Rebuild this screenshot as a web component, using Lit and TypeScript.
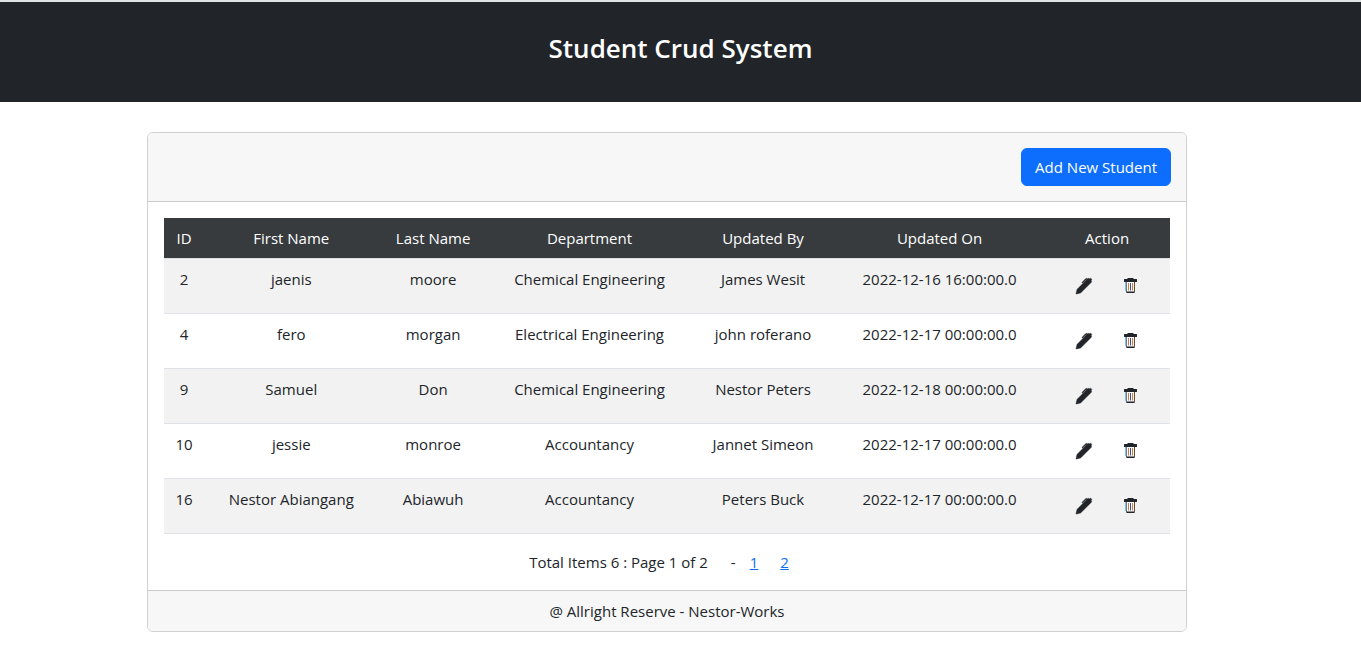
import { LitElement, html, css } from "lit";
import { customElement, state } from "lit/decorators.js";

interface Student {
  id: number;
  firstName: string;
  lastName: string;
  department: string;
  updatedBy: string;
  updatedOn: string;
}

const penIcon = html`<svg class="icon pen" viewBox="0 0 16 16" aria-hidden="true">
  <path
    d="m13.498.795.149-.149a1.207 1.207 0 1 1 1.707 1.708l-.149.148a1.5 1.5 0 0 1-.059 2.059L4.854 14.854a.5.5 0 0 1-.233.131l-4 1a.5.5 0 0 1-.606-.606l1-4a.5.5 0 0 1 .131-.232l9.642-9.642a.5.5 0 0 0-.642.056L6.854 4.854a.5.5 0 1 1-.708-.708L9.44.854A1.5 1.5 0 0 1 11.5.796a1.5 1.5 0 0 1 1.998-.001"
  />
</svg>`;

const trashIcon = html`<svg class="icon" viewBox="0 0 16 16" aria-hidden="true">
  <path class="bin-inside" d="M4 4h9v10H4z" />
  <path class="bin-left" d="M3 4h1v9H3z" />
  <path class="bin-right" d="M12 4h1v9h-1z" />
  <path d="M6 0h5l1 1h2.500a.5.5 0 0 1 .5.5V3.500a.5.5 0 0 1-.5.5h-12a.5.5 0 0 1-.5-.5v-2a.5.5 0 0 1 .5-.5H5z" />
  <path d="M4 4h.6v9.400h7.800V4h.6v9.500a1.500 1.500 0 0 1-1.500 1.500h-6A1.500 1.500 0 0 1 4 13.500z" />
  <path class="bin-stripe-warm" d="M6 5h1v7.500H6zM10 5h1v7.500h-1z" />
  <path class="bin-stripe" d="M8 5h1v7.500H8z" />
</svg>`;

@customElement("app-root")
export class AppRoot extends LitElement {
  static styles = css`
    :host {
      display: block;
      font-family: "Segoe UI", "Open Sans", "Noto Sans", sans-serif;
      font-size: 15px;
      line-height: 24px;
      color: #212529;
      background: #fff;
    }
    * {
      box-sizing: border-box;
    }
    .banner {
      border-top: 2px solid #dfe3e6;
      background: #212529;
      color: #fff;
      text-align: center;
      padding: 29px 16px 37px;
    }
    .title {
      margin: 0;
      font-size: 26px;
      line-height: 34px;
      font-weight: 600;
    }
    .page {
      padding: 30px 174px 26px 147px;
    }
    .card {
      border: 1px solid #d0d0d0;
      border-radius: 6px;
      overflow: hidden;
    }
    .card-header {
      display: flex;
      justify-content: flex-end;
      padding: 15px;
      background: #f7f7f7;
      border-bottom: 1px solid #cbcbcb;
    }
    .add {
      font: inherit;
      color: #fff;
      background: #0d6efd;
      border: 1px solid #0d6efd;
      border-radius: 6px;
      padding: 6px 13px;
      cursor: pointer;
    }
    .card-body {
      padding: 16px 16px 0;
    }
    .table {
      width: 100%;
      table-layout: fixed;
      border-collapse: separate;
      border-spacing: 0;
      text-align: center;
    }
    .w-id { width: 4%; }
    .w-first { width: 17.3%; }
    .w-last { width: 10.9%; }
    .w-dept { width: 20.2%; }
    .w-by { width: 14.3%; }
    .w-on { width: 20.8%; }
    .w-action { width: 12.5%; }
    .th {
      padding: 8px 0;
      font-weight: 400;
      color: #fff;
      background: #373b3e;
      border-bottom: 1px solid #dfe0e3;
    }
    .td {
      padding: 8px 0 22px;
      vertical-align: top;
      border-bottom: 1px solid #dee2e6;
    }
    .row:nth-child(odd) .td {
      background: #f2f2f2;
    }
    .row .actions {
      padding: 19px 0 18px;
    }
    .action-list {
      display: flex;
      justify-content: center;
      gap: 30px;
    }
    .icon-link {
      display: block;
      color: #212529;
    }
    .icon {
      display: block;
      width: 16px;
      height: 16px;
      fill: currentColor;
      overflow: visible;
    }
    .pen {
      stroke: currentColor;
      stroke-width: 0.4;
    }
    .bin-inside { fill: #f6faff; }
    .bin-left { fill: #7cc0f4; }
    .bin-right { fill: #d98a3a; }
    .bin-stripe-warm { fill: #cf8038; }
    .bin-stripe { fill: #3c4f92; }
    .pager {
      display: flex;
      justify-content: center;
      padding: 16px 16px 16px 0;
    }
    .dash {
      margin: 0 14px 0 23px;
    }
    .page-links {
      display: flex;
      gap: 22px;
    }
    .page-link {
      color: #0d6efd;
      text-decoration: underline;
    }
    .card-footer {
      padding: 8px 16px;
      text-align: center;
      background: #f7f7f7;
      border-top: 1px solid #cbcbcb;
    }
  `;

  @state() private students: Student[] = [
    { id: 2, firstName: "jaenis", lastName: "moore", department: "Chemical Engineering", updatedBy: "James Wesit", updatedOn: "2022-12-16 16:00:00.0" },
    { id: 4, firstName: "fero", lastName: "morgan", department: "Electrical Engineering", updatedBy: "john roferano", updatedOn: "2022-12-17 00:00:00.0" },
    { id: 9, firstName: "Samuel", lastName: "Don", department: "Chemical Engineering", updatedBy: "Nestor Peters", updatedOn: "2022-12-18 00:00:00.0" },
    { id: 10, firstName: "jessie", lastName: "monroe", department: "Accountancy", updatedBy: "Jannet Simeon", updatedOn: "2022-12-17 00:00:00.0" },
    { id: 16, firstName: "Nestor Abiangang", lastName: "Abiawuh", department: "Accountancy", updatedBy: "Peters Buck", updatedOn: "2022-12-17 00:00:00.0" },
  ];

  private columns = ["ID", "First Name", "Last Name", "Department", "Updated By", "Updated On", "Action"];
  private widths = ["w-id", "w-first", "w-last", "w-dept", "w-by", "w-on", "w-action"];

  private renderRow(s: Student) {
    return html`<tr class="row">
      <td class="td">${s.id}</td>
      <td class="td">${s.firstName}</td>
      <td class="td">${s.lastName}</td>
      <td class="td">${s.department}</td>
      <td class="td">${s.updatedBy}</td>
      <td class="td">${s.updatedOn}</td>
      <td class="td actions">
        <div class="action-list">
          <a class="icon-link" href="#edit" aria-label="Edit">${penIcon}</a>
          <a class="icon-link" href="#delete" aria-label="Delete">${trashIcon}</a>
        </div>
      </td>
    </tr>`;
  }

  render() {
    return html`
      <header class="banner"><h1 class="title">Student Crud System</h1></header>
      <main class="page">
        <section class="card">
          <div class="card-header">
            <button class="add" type="button">Add New Student</button>
          </div>
          <div class="card-body">
            <table class="table">
              <colgroup>
                ${this.widths.map((w) => html`<col class=${w} />`)}
              </colgroup>
              <thead>
                <tr>
                  ${this.columns.map((c) => html`<th class="th" scope="col">${c}</th>`)}
                </tr>
              </thead>
              <tbody>
                ${this.students.map((s) => this.renderRow(s))}
              </tbody>
            </table>
            <nav class="pager">
              <span>Total Items 6 : Page 1 of 2</span>
              <span class="dash">-</span>
              <span class="page-links">
                <a class="page-link" href="#1">1</a>
                <a class="page-link" href="#2">2</a>
              </span>
            </nav>
          </div>
          <footer class="card-footer">@ Allright Reserve - Nestor-Works</footer>
        </section>
      </main>
    `;
  }
}
